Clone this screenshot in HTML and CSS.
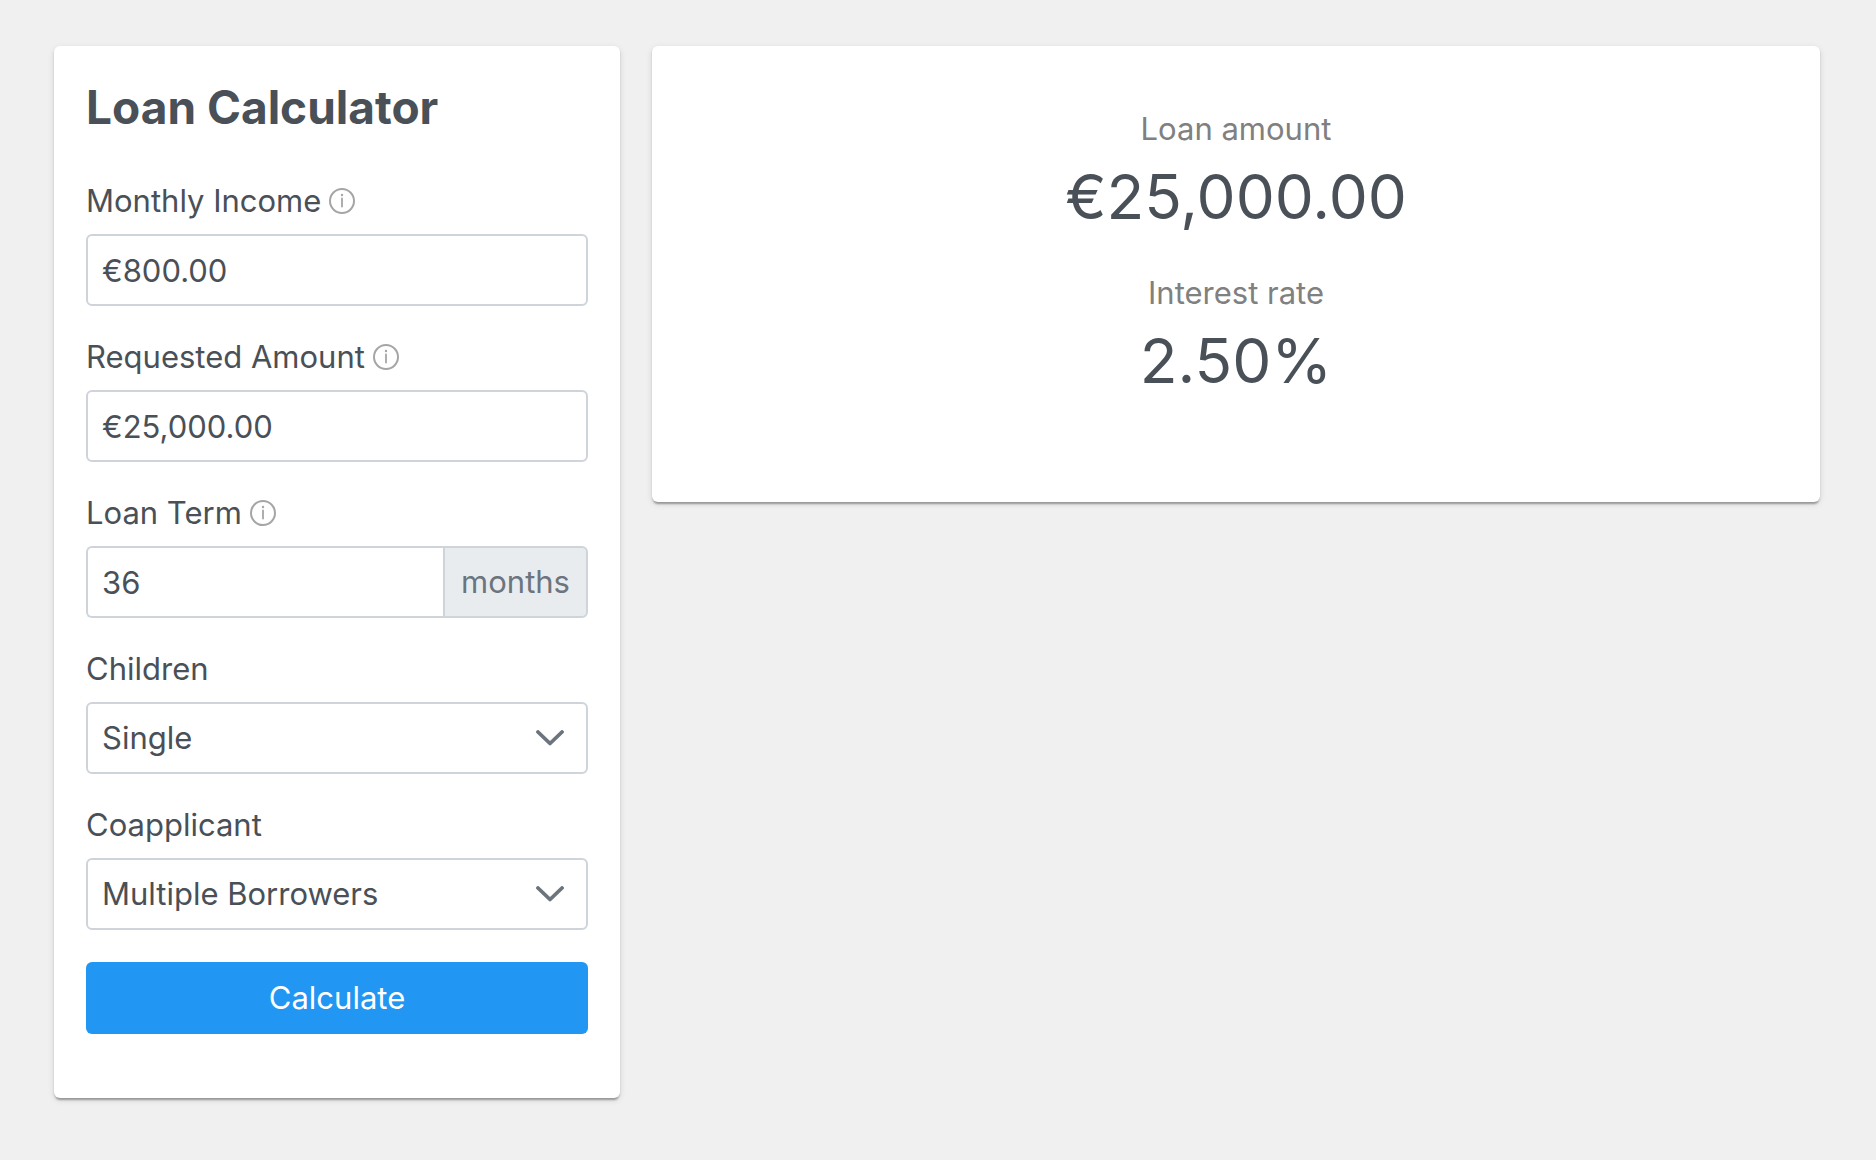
FILE: index.html
```html
<!DOCTYPE html>
<html lang="en">
<head>
  <meta charset="utf-8">
  <meta name="viewport" content="width=device-width, initial-scale=1">
  <title>Loan Calculator</title>
  <link rel="stylesheet" href="styles.css">
</head>
<body>
  <svg class="symbols" aria-hidden="true">
    <symbol id="icon-info" viewBox="0 0 26 26">
      <circle cx="13" cy="13" r="12" fill="none" stroke="currentColor" stroke-width="2"/>
      <circle cx="13" cy="7" r="1.2" fill="currentColor"/>
      <path d="M13 10.5V18.5" fill="none" stroke="currentColor" stroke-width="1.8" stroke-linecap="round"/>
    </symbol>
    <symbol id="icon-chevron" viewBox="0 0 28 16">
      <path d="M2 2L14 13.500L26 2" fill="none" stroke="currentColor" stroke-width="3.8" stroke-linecap="round" stroke-linejoin="round"/>
    </symbol>
  </svg>

  <main class="layout">
    <form class="card calculator">
      <h1 class="title">Loan Calculator</h1>

      <div class="field">
        <label class="label" for="income">Monthly Income <svg class="info" aria-hidden="true"><use href="#icon-info"/></svg></label>
        <input class="control" id="income" type="text" value="€800.00">
      </div>

      <div class="field">
        <label class="label" for="amount">Requested Amount <svg class="info" aria-hidden="true"><use href="#icon-info"/></svg></label>
        <input class="control" id="amount" type="text" value="€25,000.00">
      </div>

      <div class="field">
        <label class="label" for="term">Loan Term <svg class="info" aria-hidden="true"><use href="#icon-info"/></svg></label>
        <div class="group">
          <input class="control" id="term" type="text" value="36">
          <span class="addon">months</span>
        </div>
      </div>

      <div class="field">
        <label class="label" for="children">Children</label>
        <div class="dropdown">
          <select class="control" id="children"><option>Single</option></select>
          <svg class="chevron" aria-hidden="true"><use href="#icon-chevron"/></svg>
        </div>
      </div>

      <div class="field">
        <label class="label" for="coapplicant">Coapplicant</label>
        <div class="dropdown">
          <select class="control" id="coapplicant"><option>Multiple Borrowers</option></select>
          <svg class="chevron" aria-hidden="true"><use href="#icon-chevron"/></svg>
        </div>
      </div>

      <button class="submit" type="button">Calculate</button>
    </form>

    <section class="card results">
      <dl class="figures">
        <div class="figure">
          <dt class="figure-label">Loan amount</dt>
          <dd class="figure-value">€25,000.00</dd>
        </div>
        <div class="figure">
          <dt class="figure-label">Interest rate</dt>
          <dd class="figure-value">2.50%</dd>
        </div>
      </dl>
    </section>
  </main>
</body>
</html>
```
FILE: styles.css
```css
*,
*::before,
*::after {
  box-sizing: border-box;
}

body {
  margin: 0;
  padding: 46px 56px 46px 54px;
  background: #f0f0f0;
  color: #495057;
  font-family: Inter, "Liberation Sans", sans-serif;
  font-size: 31px;
  line-height: 38px;
}

.symbols {
  display: none;
}

.layout {
  display: grid;
  grid-template-columns: minmax(0, 283fr) minmax(0, 584fr);
  gap: 32px;
  align-items: start;
}

.card {
  background: #fff;
  border-radius: 6px;
  box-shadow:
    0 4px 2px -2px rgba(0, 0, 0, 0.2),
    0 2px 2px 0 rgba(0, 0, 0, 0.14),
    0 2px 6px 0 rgba(0, 0, 0, 0.12);
}

.calculator {
  padding: 32px 32px 64px;
}

.results {
  padding: 64px 32px;
  text-align: center;
}

.title {
  margin: 0 0 46px;
  font-size: 46px;
  font-weight: 700;
  line-height: 58px;
}

.field {
  margin-bottom: 32px;
}

.label {
  display: flex;
  align-items: center;
  gap: 8px;
  margin-bottom: 14px;
}

.info {
  width: 26px;
  height: 26px;
  color: #a5a5a5;
}

.control {
  display: block;
  width: 100%;
  min-width: 0;
  height: 72px;
  margin: 0;
  padding: 0 14px;
  border: 2px solid #ced4da;
  border-radius: 6px;
  background: #fff;
  color: inherit;
  font: inherit;
  appearance: none;
}

.group {
  display: flex;
}

.group .control {
  flex: 1;
  border-right: 0;
  border-radius: 6px 0 0 6px;
}

.addon {
  display: flex;
  align-items: center;
  padding: 0 16px;
  border: 2px solid #ced4da;
  border-radius: 0 6px 6px 0;
  background: #e9ecef;
  color: #6c757d;
}

.dropdown {
  display: grid;
  align-items: center;
}

.dropdown > * {
  grid-area: 1 / 1;
}

.chevron {
  justify-self: end;
  width: 28px;
  height: 16px;
  margin-right: 24px;
  color: #6c757d;
  pointer-events: none;
}

.submit {
  display: block;
  width: 100%;
  height: 72px;
  padding: 0 32px;
  border: 0;
  border-radius: 6px;
  background: #2196f3;
  color: #fff;
  font: inherit;
}

.figures {
  margin: 0;
}

.figure {
  margin-bottom: 38px;
}

.figure-label {
  margin-bottom: 10px;
  color: #808080;
}

.figure-value {
  margin: 0;
  font-size: 62px;
  line-height: 78px;
}
```
